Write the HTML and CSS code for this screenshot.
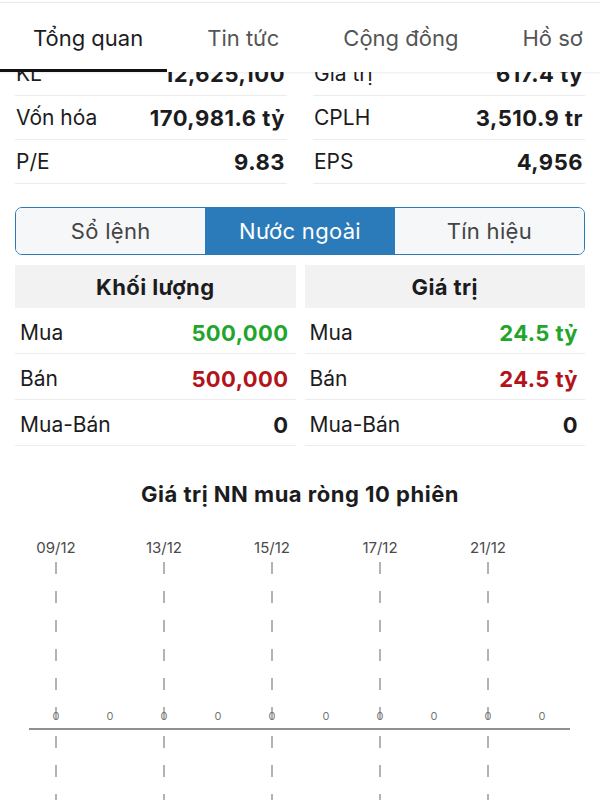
FILE: index.html
```html
<!DOCTYPE html>
<html lang="vi">
<head>
    <meta charset="UTF-8">
    <meta name="viewport" content="width=device-width, initial-scale=1.0">
    <title>Nước ngoài</title>
    <link rel="stylesheet" href="styles.css">
</head>
<body>

    <!-- Top tabs -->
    <div class="tabbar">
        <div class="tabs">
            <span class="tab active">Tổng quan</span>
            <span class="tab">Tin tức</span>
            <span class="tab">Cộng đồng</span>
            <span class="tab">Hồ sơ</span>
        </div>
        <div class="tab-underline"></div>
    </div>

    <!-- Overview stats (scrolled) -->
    <div class="stats">
        <div class="stats-grid">
            <div class="stat"><span>KL</span><b>12,625,100</b></div>
            <div class="stat"><span>Giá trị</span><b>617.4 tỷ</b></div>
            <div class="stat"><span>Vốn hóa</span><b>170,981.6 tỷ</b></div>
            <div class="stat"><span>CPLH</span><b>3,510.9 tr</b></div>
            <div class="stat"><span>P/E</span><b>9.83</b></div>
            <div class="stat"><span>EPS</span><b>4,956</b></div>
        </div>
    </div>

    <!-- Segmented control -->
    <div class="segments">
        <div class="segment">Sổ lệnh</div>
        <div class="segment active">Nước ngoài</div>
        <div class="segment">Tín hiệu</div>
    </div>

    <!-- Foreign trading tables -->
    <div class="foreign">
        <div class="ftable">
            <div class="ftable-head">Khối lượng</div>
            <div class="frow"><span>Mua</span><b class="up">500,000</b></div>
            <div class="frow"><span>Bán</span><b class="down">500,000</b></div>
            <div class="frow"><span>Mua-Bán</span><b>0</b></div>
        </div>
        <div class="ftable">
            <div class="ftable-head">Giá trị</div>
            <div class="frow"><span>Mua</span><b class="up">24.5 tỷ</b></div>
            <div class="frow"><span>Bán</span><b class="down">24.5 tỷ</b></div>
            <div class="frow"><span>Mua-Bán</span><b>0</b></div>
        </div>
    </div>

    <h2 class="chart-title">Giá trị NN mua ròng 10 phiên</h2>

    <svg class="chart" width="600" height="270" viewBox="0 0 600 270">
        <g class="dates">
            <text x="56" y="23">09/12</text>
            <text x="164" y="23">13/12</text>
            <text x="272" y="23">15/12</text>
            <text x="380" y="23">17/12</text>
            <text x="488" y="23">21/12</text>
        </g>
        <g class="grid">
            <line x1="56" y1="32" x2="56" y2="270"/>
            <line x1="164" y1="32" x2="164" y2="270"/>
            <line x1="272" y1="32" x2="272" y2="270"/>
            <line x1="380" y1="32" x2="380" y2="270"/>
            <line x1="488" y1="32" x2="488" y2="270"/>
        </g>
        <line class="axis" x1="29" y1="199" x2="570" y2="199"/>
        <g class="zeros">
            <text x="56" y="190">0</text>
            <text x="110" y="190">0</text>
            <text x="164" y="190">0</text>
            <text x="218" y="190">0</text>
            <text x="272" y="190">0</text>
            <text x="326" y="190">0</text>
            <text x="380" y="190">0</text>
            <text x="434" y="190">0</text>
            <text x="488" y="190">0</text>
            <text x="542" y="190">0</text>
        </g>
    </svg>

</body>
</html>
```

FILE: styles.css
```css
body {
    margin: 0;
    background-color: #fff;
    font-family: Inter, "Noto Sans", sans-serif;
    color: #1c1c1e;
}

/* tabs */
.tabbar {
    position: relative;
    z-index: 1;
    margin-top: 2px;
    border-top: 1px solid #e8e8e8;
    background-color: #fff;
    box-shadow: 0 1px 2px rgba(0, 0, 0, 0.08);
}
.tabs {
    display: flex;
    align-items: center;
    gap: 64px;
    box-sizing: border-box;
    height: 66px;
    padding: 4px 0 0 33px;
    font-size: 22px;
    white-space: nowrap;
}
.tab {
    color: #555;
}
.tab.active {
    color: #1c1c1e;
}
.tab-underline {
    width: 167px;
    height: 3px;
    background-color: #111;
}

/* stats */
.stats {
    overflow: hidden;
    padding: 0 15px;
}
.stats-grid {
    display: grid;
    grid-template-columns: 1fr 1fr;
    column-gap: 26px;
    margin-top: -20px;
}
.stat {
    display: flex;
    justify-content: space-between;
    align-items: center;
    box-sizing: border-box;
    height: 44px;
    padding: 0 2px 0 1px;
    border-bottom: 1px solid #ececec;
    font-size: 21px;
}
.stat b {
    font-size: 22px;
    font-weight: 700;
    letter-spacing: 0.5px;
}

/* segmented control */
.segments {
    display: grid;
    grid-template-columns: 1fr 1fr 1fr;
    box-sizing: border-box;
    height: 48px;
    margin: 23px 15px 0;
    border: 1.5px solid #2d7ab6;
    border-radius: 7px;
    overflow: hidden;
}
.segment {
    display: flex;
    align-items: center;
    justify-content: center;
    background-color: #f6f7f9;
    color: #444;
    font-size: 22px;
    letter-spacing: 0.3px;
}
.segment.active {
    background-color: #2b7bbb;
    color: #fff;
}

/* foreign tables */
.foreign {
    display: grid;
    grid-template-columns: 1fr 1fr;
    column-gap: 9px;
    margin: 10px 15px 0;
}
.ftable-head {
    display: flex;
    align-items: center;
    justify-content: center;
    height: 43px;
    background-color: #f2f2f3;
    font-size: 22px;
    font-weight: 700;
    letter-spacing: 0.4px;
}
.frow {
    display: flex;
    justify-content: space-between;
    align-items: center;
    box-sizing: border-box;
    height: 46px;
    padding: 4px 7px 0 5px;
    border-bottom: 1px solid #ececec;
    font-size: 21px;
}
.frow b {
    font-size: 22px;
    font-weight: 700;
    letter-spacing: 0.4px;
}
.up {
    color: #22a52b;
}
.down {
    color: #b3131b;
}

/* chart */
.chart-title {
    margin: 35px 0 0;
    font-size: 22px;
    line-height: 26px;
    font-weight: 700;
    letter-spacing: 0.5px;
    text-align: center;
}
.chart {
    display: block;
    margin-top: 23px;
}
.dates text {
    font-size: 15px;
    fill: #4a4a4a;
    text-anchor: middle;
}
.grid line {
    stroke: #9a9a9a;
    stroke-width: 1.5;
    stroke-dasharray: 12 17;
}
.axis {
    stroke: #6b6b6b;
    stroke-width: 1.5;
}
.zeros text {
    font-size: 11px;
    fill: #777;
    text-anchor: middle;
}
```
